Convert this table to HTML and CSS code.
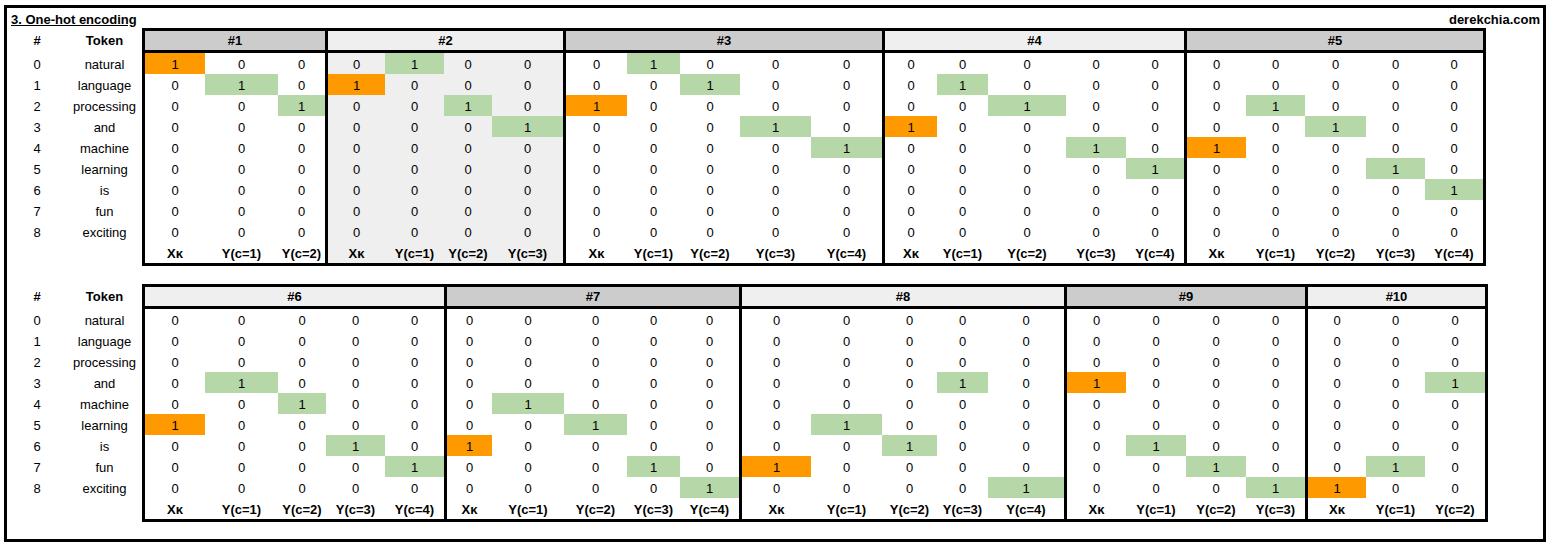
FILE: index.html
```html
<!DOCTYPE html>
<html>
<head>
<meta charset="utf-8">
<title>3. One-hot encoding</title>
<link rel="stylesheet" href="styles.css">
</head>
<body>
<div class="sheet">
  <div class="titlebar"><span class="title">3. One-hot encoding</span><span class="site">derekchia.com</span></div>

  <div class="tbl">
    <div class="labels">
      <div class="lrow head"><span>#</span><span>Token</span></div>
      <div class="lrow"><span>0</span><span>natural</span></div>
      <div class="lrow"><span>1</span><span>language</span></div>
      <div class="lrow"><span>2</span><span>processing</span></div>
      <div class="lrow"><span>3</span><span>and</span></div>
      <div class="lrow"><span>4</span><span>machine</span></div>
      <div class="lrow"><span>5</span><span>learning</span></div>
      <div class="lrow"><span>6</span><span>is</span></div>
      <div class="lrow"><span>7</span><span>fun</span></div>
      <div class="lrow"><span>8</span><span>exciting</span></div>
    </div>

    <div class="grp dark">
      <div class="gh">#1</div>
      <div class="gb w1">
        <span class="x">1</span><span>0</span><span>0</span>
        <span>0</span><span class="y">1</span><span>0</span>
        <span>0</span><span>0</span><span class="y">1</span>
        <span>0</span><span>0</span><span>0</span>
        <span>0</span><span>0</span><span>0</span>
        <span>0</span><span>0</span><span>0</span>
        <span>0</span><span>0</span><span>0</span>
        <span>0</span><span>0</span><span>0</span>
        <span>0</span><span>0</span><span>0</span>
        <span class="f">Xκ</span><span class="f">Y(c=1)</span><span class="f">Y(c=2)</span>
      </div>
    </div>

    <div class="grp light">
      <div class="gh">#2</div>
      <div class="gb w2 shade">
        <span>0</span><span class="y">1</span><span>0</span><span>0</span>
        <span class="x">1</span><span>0</span><span>0</span><span>0</span>
        <span>0</span><span>0</span><span class="y">1</span><span>0</span>
        <span>0</span><span>0</span><span>0</span><span class="y">1</span>
        <span>0</span><span>0</span><span>0</span><span>0</span>
        <span>0</span><span>0</span><span>0</span><span>0</span>
        <span>0</span><span>0</span><span>0</span><span>0</span>
        <span>0</span><span>0</span><span>0</span><span>0</span>
        <span>0</span><span>0</span><span>0</span><span>0</span>
        <span class="f">Xκ</span><span class="f">Y(c=1)</span><span class="f">Y(c=2)</span><span class="f">Y(c=3)</span>
      </div>
    </div>

    <div class="grp dark">
      <div class="gh">#3</div>
      <div class="gb w3">
        <span>0</span><span class="y">1</span><span>0</span><span>0</span><span>0</span>
        <span>0</span><span>0</span><span class="y">1</span><span>0</span><span>0</span>
        <span class="x">1</span><span>0</span><span>0</span><span>0</span><span>0</span>
        <span>0</span><span>0</span><span>0</span><span class="y">1</span><span>0</span>
        <span>0</span><span>0</span><span>0</span><span>0</span><span class="y">1</span>
        <span>0</span><span>0</span><span>0</span><span>0</span><span>0</span>
        <span>0</span><span>0</span><span>0</span><span>0</span><span>0</span>
        <span>0</span><span>0</span><span>0</span><span>0</span><span>0</span>
        <span>0</span><span>0</span><span>0</span><span>0</span><span>0</span>
        <span class="f">Xκ</span><span class="f">Y(c=1)</span><span class="f">Y(c=2)</span><span class="f">Y(c=3)</span><span class="f">Y(c=4)</span>
      </div>
    </div>

    <div class="grp light">
      <div class="gh">#4</div>
      <div class="gb w4">
        <span>0</span><span>0</span><span>0</span><span>0</span><span>0</span>
        <span>0</span><span class="y">1</span><span>0</span><span>0</span><span>0</span>
        <span>0</span><span>0</span><span class="y">1</span><span>0</span><span>0</span>
        <span class="x">1</span><span>0</span><span>0</span><span>0</span><span>0</span>
        <span>0</span><span>0</span><span>0</span><span class="y">1</span><span>0</span>
        <span>0</span><span>0</span><span>0</span><span>0</span><span class="y">1</span>
        <span>0</span><span>0</span><span>0</span><span>0</span><span>0</span>
        <span>0</span><span>0</span><span>0</span><span>0</span><span>0</span>
        <span>0</span><span>0</span><span>0</span><span>0</span><span>0</span>
        <span class="f">Xκ</span><span class="f">Y(c=1)</span><span class="f">Y(c=2)</span><span class="f">Y(c=3)</span><span class="f">Y(c=4)</span>
      </div>
    </div>

    <div class="grp dark">
      <div class="gh">#5</div>
      <div class="gb w5">
        <span>0</span><span>0</span><span>0</span><span>0</span><span>0</span>
        <span>0</span><span>0</span><span>0</span><span>0</span><span>0</span>
        <span>0</span><span class="y">1</span><span>0</span><span>0</span><span>0</span>
        <span>0</span><span>0</span><span class="y">1</span><span>0</span><span>0</span>
        <span class="x">1</span><span>0</span><span>0</span><span>0</span><span>0</span>
        <span>0</span><span>0</span><span>0</span><span class="y">1</span><span>0</span>
        <span>0</span><span>0</span><span>0</span><span>0</span><span class="y">1</span>
        <span>0</span><span>0</span><span>0</span><span>0</span><span>0</span>
        <span>0</span><span>0</span><span>0</span><span>0</span><span>0</span>
        <span class="f">Xκ</span><span class="f">Y(c=1)</span><span class="f">Y(c=2)</span><span class="f">Y(c=3)</span><span class="f">Y(c=4)</span>
      </div>
    </div>
  </div>

  <div class="tbl">
    <div class="labels">
      <div class="lrow head"><span>#</span><span>Token</span></div>
      <div class="lrow"><span>0</span><span>natural</span></div>
      <div class="lrow"><span>1</span><span>language</span></div>
      <div class="lrow"><span>2</span><span>processing</span></div>
      <div class="lrow"><span>3</span><span>and</span></div>
      <div class="lrow"><span>4</span><span>machine</span></div>
      <div class="lrow"><span>5</span><span>learning</span></div>
      <div class="lrow"><span>6</span><span>is</span></div>
      <div class="lrow"><span>7</span><span>fun</span></div>
      <div class="lrow"><span>8</span><span>exciting</span></div>
    </div>

    <div class="grp light">
      <div class="gh">#6</div>
      <div class="gb w6">
        <span>0</span><span>0</span><span>0</span><span>0</span><span>0</span>
        <span>0</span><span>0</span><span>0</span><span>0</span><span>0</span>
        <span>0</span><span>0</span><span>0</span><span>0</span><span>0</span>
        <span>0</span><span class="y">1</span><span>0</span><span>0</span><span>0</span>
        <span>0</span><span>0</span><span class="y">1</span><span>0</span><span>0</span>
        <span class="x">1</span><span>0</span><span>0</span><span>0</span><span>0</span>
        <span>0</span><span>0</span><span>0</span><span class="y">1</span><span>0</span>
        <span>0</span><span>0</span><span>0</span><span>0</span><span class="y">1</span>
        <span>0</span><span>0</span><span>0</span><span>0</span><span>0</span>
        <span class="f">Xκ</span><span class="f">Y(c=1)</span><span class="f">Y(c=2)</span><span class="f">Y(c=3)</span><span class="f">Y(c=4)</span>
      </div>
    </div>

    <div class="grp dark">
      <div class="gh">#7</div>
      <div class="gb w7">
        <span>0</span><span>0</span><span>0</span><span>0</span><span>0</span>
        <span>0</span><span>0</span><span>0</span><span>0</span><span>0</span>
        <span>0</span><span>0</span><span>0</span><span>0</span><span>0</span>
        <span>0</span><span>0</span><span>0</span><span>0</span><span>0</span>
        <span>0</span><span class="y">1</span><span>0</span><span>0</span><span>0</span>
        <span>0</span><span>0</span><span class="y">1</span><span>0</span><span>0</span>
        <span class="x">1</span><span>0</span><span>0</span><span>0</span><span>0</span>
        <span>0</span><span>0</span><span>0</span><span class="y">1</span><span>0</span>
        <span>0</span><span>0</span><span>0</span><span>0</span><span class="y">1</span>
        <span class="f">Xκ</span><span class="f">Y(c=1)</span><span class="f">Y(c=2)</span><span class="f">Y(c=3)</span><span class="f">Y(c=4)</span>
      </div>
    </div>

    <div class="grp light">
      <div class="gh">#8</div>
      <div class="gb w8">
        <span>0</span><span>0</span><span>0</span><span>0</span><span>0</span>
        <span>0</span><span>0</span><span>0</span><span>0</span><span>0</span>
        <span>0</span><span>0</span><span>0</span><span>0</span><span>0</span>
        <span>0</span><span>0</span><span>0</span><span class="y">1</span><span>0</span>
        <span>0</span><span>0</span><span>0</span><span>0</span><span>0</span>
        <span>0</span><span class="y">1</span><span>0</span><span>0</span><span>0</span>
        <span>0</span><span>0</span><span class="y">1</span><span>0</span><span>0</span>
        <span class="x">1</span><span>0</span><span>0</span><span>0</span><span>0</span>
        <span>0</span><span>0</span><span>0</span><span>0</span><span class="y">1</span>
        <span class="f">Xκ</span><span class="f">Y(c=1)</span><span class="f">Y(c=2)</span><span class="f">Y(c=3)</span><span class="f">Y(c=4)</span>
      </div>
    </div>

    <div class="grp dark">
      <div class="gh">#9</div>
      <div class="gb w9">
        <span>0</span><span>0</span><span>0</span><span>0</span>
        <span>0</span><span>0</span><span>0</span><span>0</span>
        <span>0</span><span>0</span><span>0</span><span>0</span>
        <span class="x">1</span><span>0</span><span>0</span><span>0</span>
        <span>0</span><span>0</span><span>0</span><span>0</span>
        <span>0</span><span>0</span><span>0</span><span>0</span>
        <span>0</span><span class="y">1</span><span>0</span><span>0</span>
        <span>0</span><span>0</span><span class="y">1</span><span>0</span>
        <span>0</span><span>0</span><span>0</span><span class="y">1</span>
        <span class="f">Xκ</span><span class="f">Y(c=1)</span><span class="f">Y(c=2)</span><span class="f">Y(c=3)</span>
      </div>
    </div>

    <div class="grp light">
      <div class="gh">#10</div>
      <div class="gb w10">
        <span>0</span><span>0</span><span>0</span>
        <span>0</span><span>0</span><span>0</span>
        <span>0</span><span>0</span><span>0</span>
        <span>0</span><span>0</span><span class="y">1</span>
        <span>0</span><span>0</span><span>0</span>
        <span>0</span><span>0</span><span>0</span>
        <span>0</span><span>0</span><span>0</span>
        <span>0</span><span class="y">1</span><span>0</span>
        <span class="x">1</span><span>0</span><span>0</span>
        <span class="f">Xκ</span><span class="f">Y(c=1)</span><span class="f">Y(c=2)</span>
      </div>
    </div>
  </div>
</div>
</body>
</html>
```

FILE: styles.css
```css
* { box-sizing: border-box; }

body {
  margin: 0;
  background: #fff;
  color: #000;
  font-family: "Liberation Sans", Arial, sans-serif;
  font-size: 13px;
}

.sheet {
  margin: 5px 0 0 4px;
  width: 1542px;
  height: 537px;
  border: 3px solid #000;
}

.titlebar {
  display: flex;
  justify-content: space-between;
  height: 20px;
  line-height: 24px;
  padding: 0 3px 0 4px;
  font-weight: bold;
}

.title { text-decoration: underline; }

.tbl { display: flex; }
.tbl + .tbl { margin-top: 18px; }

.labels {
  width: 135px;
  padding-top: 3px;
}

.lrow {
  display: grid;
  grid-template-columns: 60px 75px;
  height: 21px;
  padding-top: 2px;
  line-height: 19px;
  text-align: center;
}

.lrow.head {
  height: 22px;
  padding-top: 1px;
  line-height: 18px;
  padding-bottom: 3px;
  font-weight: bold;
}

.grp {
  border: 3px solid #000;
  border-left: 0;
}

.labels + .grp { border-left: 3px solid #000; }

.gh {
  height: 22px;
  padding-top: 1px;
  line-height: 18px;
  border-bottom: 3px solid #000;
  text-align: center;
  font-weight: bold;
}

.dark .gh { background: #cccccc; }
.light .gh { background: #efefef; }

.gb {
  display: grid;
  grid-auto-rows: 21px;
  text-align: center;
}

.gb span {
  padding-top: 2px;
  line-height: 19px;
}

.gb.shade { background: #efefef; }

.x { background: #ff9900; }
.y { background: #b6d7a8; }
.f { font-weight: bold; }

.w1 { grid-template-columns: 60px 73px 47px; }
.w2 { grid-template-columns: 57px 59px 48px 71px; }
.w3 { grid-template-columns: 61px 53px 60px 71px 71px; }
.w4 { grid-template-columns: 52px 51px 78px 60px 58px; }
.w5 { grid-template-columns: 59px 59px 61px 59px 58px; }
.w6 { grid-template-columns: 60px 73px 48px 59px 59px; }
.w7 { grid-template-columns: 45px 72px 63px 53px 59px; }
.w8 { grid-template-columns: 69px 71px 55px 51px 76px; }
.w9 { grid-template-columns: 59px 60px 60px 59px; }
.w10 { grid-template-columns: 58px 59px 60px; }
```
